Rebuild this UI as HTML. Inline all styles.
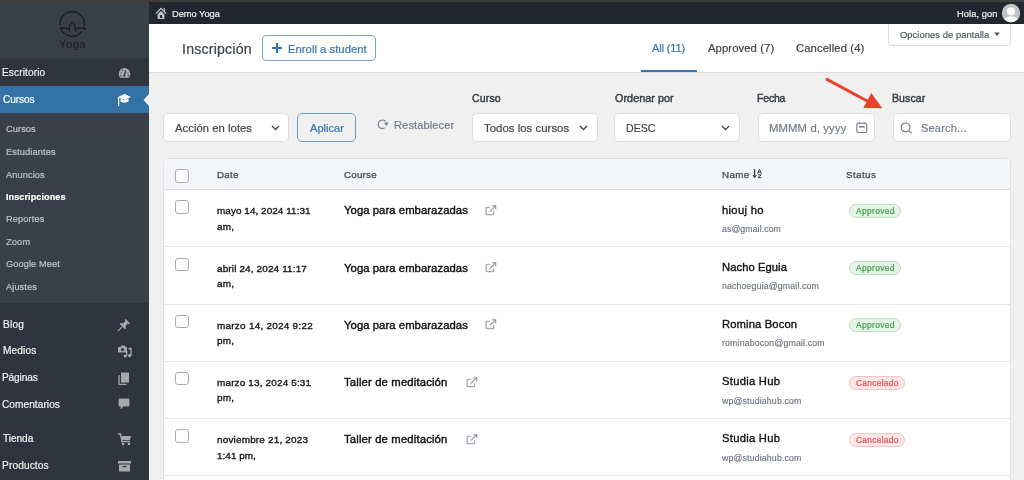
<!DOCTYPE html>
<html><head><meta charset="utf-8"><style>
html,body{margin:0;padding:0;width:1024px;height:480px;overflow:hidden;background:#f0f0f1;position:relative}
.r{position:absolute;display:block}
.t{position:absolute;white-space:nowrap;line-height:1;will-change:transform;font-family:"Liberation Sans",sans-serif}
</style></head><body>
<div class="r" style="left:0px;top:0px;width:1024px;height:2px;background:#3e3e3f"></div>
<div class="r" style="left:0px;top:2px;width:149px;height:56px;background:#3a404a"></div>
<div class="r" style="left:0px;top:58px;width:149px;height:422px;background:#2f343e"></div>
<div class="r" style="left:0px;top:86px;width:149px;height:27px;background:#3472a6"></div>
<div class="r" style="left:0px;top:113px;width:149px;height:190px;background:#3a404a"></div>
<svg class="r" style="left:0px;top:0px" width="149" height="58" viewBox="0 0 149 58">
<g fill="none" stroke="#1e1c1d" stroke-width="1.45" stroke-linecap="round" stroke-linejoin="round">
<path d="M59.92 24.71 A12.3 12.3 0 1 1 84.11 27.08"/>
<path d="M81.96 31.49 A12.3 12.3 0 0 1 60.60 28.09"/>
<path d="M69.5 31.4 C68.8 28 69.4 24.2 72.3 21.7 C75.2 24.2 75.8 28 75.1 31.4"/>
<path d="M60.4 28.2 C63 27.9 66 28.1 68.9 29.1 M75.6 29.1 C78.5 27.8 82 27.6 85.9 29.3"/>
</g></svg>
<div class="t" style="left:58.90px;top:39.00px;font-size:11.3px;color:#1e1c1d;font-weight:400;letter-spacing:0.425px;-webkit-text-stroke:0.1px #1e1c1d;">Yoga</div>
<div class="t" style="left:2.27px;top:68.00px;font-size:10.1px;color:#f0f0f1;font-weight:400;letter-spacing:0.127px;-webkit-text-stroke:0.2px #f0f0f1;">Escritorio</div>
<div class="t" style="left:2.59px;top:95.00px;font-size:10.1px;color:#ffffff;font-weight:400;letter-spacing:-0.077px;-webkit-text-stroke:0.2px #ffffff;">Cursos</div>
<div class="t" style="left:6.12px;top:125.00px;font-size:9.25px;color:#c3c4c7;font-weight:400;letter-spacing:0.078px;-webkit-text-stroke:0.2px #c3c4c7;">Cursos</div>
<div class="t" style="left:5.88px;top:148.00px;font-size:9.25px;color:#c3c4c7;font-weight:400;letter-spacing:0.12px;-webkit-text-stroke:0.2px #c3c4c7;">Estudiantes</div>
<div class="t" style="left:6.36px;top:171.00px;font-size:9.25px;color:#c3c4c7;font-weight:400;letter-spacing:0.082px;-webkit-text-stroke:0.2px #c3c4c7;">Anuncios</div>
<div class="t" style="left:6.07px;top:193.00px;font-size:9.1px;color:#ffffff;font-weight:700;letter-spacing:0.069px;-webkit-text-stroke:0.2px #ffffff;">Inscripciones</div>
<div class="t" style="left:5.88px;top:215.00px;font-size:9.25px;color:#c3c4c7;font-weight:400;letter-spacing:0.122px;-webkit-text-stroke:0.2px #c3c4c7;">Reportes</div>
<div class="t" style="left:6.34px;top:238.00px;font-size:9.25px;color:#c3c4c7;font-weight:400;letter-spacing:0.146px;-webkit-text-stroke:0.2px #c3c4c7;">Zoom</div>
<div class="t" style="left:6.12px;top:260.00px;font-size:9.25px;color:#c3c4c7;font-weight:400;letter-spacing:0.088px;-webkit-text-stroke:0.2px #c3c4c7;">Google Meet</div>
<div class="t" style="left:6.36px;top:283.00px;font-size:9.25px;color:#c3c4c7;font-weight:400;letter-spacing:0.077px;-webkit-text-stroke:0.2px #c3c4c7;">Ajustes</div>
<div class="t" style="left:2.60px;top:320.00px;font-size:10.1px;color:#f0f0f1;font-weight:400;letter-spacing:0.225px;-webkit-text-stroke:0.2px #f0f0f1;">Blog</div>
<div class="t" style="left:2.60px;top:346.00px;font-size:10.1px;color:#f0f0f1;font-weight:400;letter-spacing:0.147px;-webkit-text-stroke:0.2px #f0f0f1;">Medios</div>
<div class="t" style="left:2.45px;top:373.00px;font-size:10.1px;color:#f0f0f1;font-weight:400;letter-spacing:-0.129px;-webkit-text-stroke:0.2px #f0f0f1;">Páginas</div>
<div class="t" style="left:2.48px;top:400.00px;font-size:10.1px;color:#f0f0f1;font-weight:400;letter-spacing:0.065px;-webkit-text-stroke:0.2px #f0f0f1;">Comentarios</div>
<div class="t" style="left:2.67px;top:434.00px;font-size:10.1px;color:#f0f0f1;font-weight:400;letter-spacing:-0.036px;-webkit-text-stroke:0.2px #f0f0f1;">Tienda</div>
<div class="t" style="left:2.45px;top:461.00px;font-size:10.1px;color:#f0f0f1;font-weight:400;letter-spacing:0.148px;-webkit-text-stroke:0.2px #f0f0f1;">Productos</div>
<svg class="r" style="left:143px;top:94px" width="6" height="12"><path d="M6 0 L0.5 6 L6 12Z" fill="#f0f0f1"/></svg>
<svg class="r" style="left:118px;top:67px" width="13" height="12" viewBox="0 0 13 12">
<path d="M6.5 1 A5.8 5.8 0 0 0 0.7 6.8 C0.7 8.3 1.2 9.6 2.1 10.7 L10.9 10.7 C11.8 9.6 12.3 8.3 12.3 6.8 A5.8 5.8 0 0 0 6.5 1Z" fill="#a7aaad"/>
<path d="M7.6 3.5 L6.4 8.2" stroke="#2f343e" stroke-width="1.2"/><circle cx="6.3" cy="8.6" r="1.1" fill="#2f343e"/>
<circle cx="3" cy="6" r=".6" fill="#2f343e"/><circle cx="10" cy="6" r=".6" fill="#2f343e"/><circle cx="4.3" cy="3.4" r=".6" fill="#2f343e"/><circle cx="2.6" cy="8.7" r=".6" fill="#2f343e"/><circle cx="10.4" cy="8.7" r=".6" fill="#2f343e"/>
</svg>
<svg class="r" style="left:117px;top:93px" width="15" height="14" viewBox="0 0 15 14">
<path d="M7.5 1 L14 4 L7.5 7 L1 4Z" fill="#fff"/>
<path d="M3.5 5.5 L3.5 8.5 C5 9.8 10 9.8 11.5 8.5 L11.5 5.5 L7.5 7.5Z" fill="#fff"/>
<rect x="1" y="4" width="1.2" height="9" fill="#fff"/>
</svg>
<svg class="r" style="left:117px;top:318px" width="14" height="14" viewBox="0 0 14 14">
<path d="M8.5 0.8 L13.2 5.5 L12 6.2 L10.8 5.6 L8.6 8 L9 10.5 L8 11.3 L2.7 6 L3.5 5 L6 5.4 L8.4 3.2 L7.8 2 Z" fill="#a7aaad"/>
<path d="M5.2 8.8 L0.8 13.2" stroke="#a7aaad" stroke-width="1.2"/>
</svg>
<svg class="r" style="left:118px;top:345px" width="14" height="13" viewBox="0 0 14 13">
<path d="M0 2 L2.5 2 L3.5 0.5 L6.5 0.5 L7.5 2 L9 2 L9 7.5 L0 7.5Z" fill="#a7aaad"/><circle cx="4.5" cy="4.6" r="1.6" fill="#2f343e"/>
<path d="M10.5 4 L13 3.3 L13 10.5" stroke="#a7aaad" stroke-width="1.3" fill="none"/><circle cx="11.6" cy="10.6" r="1.6" fill="#a7aaad"/><circle cx="7.2" cy="11" r="1.6" fill="#a7aaad"/><path d="M8.8 11 L8.8 6" stroke="#a7aaad" stroke-width="1.2"/>
</svg>
<svg class="r" style="left:118px;top:372px" width="12" height="13" viewBox="0 0 12 13">
<rect x="3" y="0.5" width="8" height="10" fill="#a7aaad"/><path d="M1 3 L1 12.5 L8.5 12.5" stroke="#a7aaad" stroke-width="1.3" fill="none"/>
</svg>
<svg class="r" style="left:118px;top:398px" width="12" height="12" viewBox="0 0 12 12">
<path d="M1 1 L11 1 L11 8 L5 8 L3 11 L3 8 L1 8Z" fill="#a7aaad" stroke="#a7aaad" stroke-width="0.8" stroke-linejoin="round"/>
</svg>
<svg class="r" style="left:118px;top:433px" width="14" height="13" viewBox="0 0 14 13">
<path d="M0 1 L2.5 1 L4 8.5 L12 8.5" stroke="#a7aaad" stroke-width="1.3" fill="none"/><path d="M3 3 L13 3 L12 7 L3.8 7Z" fill="#a7aaad"/>
<circle cx="5" cy="11" r="1.3" fill="#a7aaad"/><circle cx="11" cy="11" r="1.3" fill="#a7aaad"/>
</svg>
<svg class="r" style="left:118px;top:461px" width="13" height="11" viewBox="0 0 13 11">
<rect x="0" y="0" width="13" height="2.5" fill="#a7aaad"/><rect x="1" y="3.5" width="11" height="7" fill="#a7aaad"/><rect x="4.5" y="5" width="4" height="1.2" fill="#2f343e"/>
</svg>
<div class="r" style="left:149px;top:2px;width:875px;height:22px;background:#23272f"></div>
<svg class="r" style="left:155px;top:7px" width="12" height="13" viewBox="0 0 12 13">
<path d="M0.9 6.6 L6 1.4 L11.1 6.6" stroke="#c3c4c7" stroke-width="1.3" fill="none"/>
<rect x="8.6" y="1.2" width="1.3" height="3.4" fill="#c3c4c7"/>
<path d="M2.6 7.3 L6 3.9 L9.4 7.3 L9.4 12 L2.6 12Z" fill="#c3c4c7"/>
<rect x="4.9" y="8.1" width="2.3" height="2.9" fill="#23272f"/>
</svg>
<div class="t" style="left:172.12px;top:10.00px;font-size:9.3px;color:#f0f0f1;font-weight:400;letter-spacing:-0.023px;-webkit-text-stroke:0.2px #f0f0f1;">Demo Yoga</div>
<div class="t" style="left:956.91px;top:10.00px;font-size:9.3px;color:#f0f0f1;font-weight:400;letter-spacing:0.069px;-webkit-text-stroke:0.2px #f0f0f1;">Hola, gon</div>
<svg class="r" style="left:1001px;top:3px" width="20" height="20" viewBox="0 0 20 20">
<defs><clipPath id="av"><circle cx="10" cy="10" r="9.2"/></clipPath></defs>
<circle cx="10" cy="10" r="9.2" fill="#c4c4c4"/>
<g clip-path="url(#av)" fill="#fff"><circle cx="10" cy="8.3" r="4.1"/><ellipse cx="10" cy="19.5" rx="8" ry="6.3"/></g>
</svg>
<div class="r" style="left:149px;top:24px;width:875px;height:48px;background:#fff"></div>
<div class="r" style="left:149px;top:72px;width:875px;height:1px;background:#dcdcde"></div>
<div class="r" style="left:149px;top:73px;width:875px;height:407px;background:#f0f0f1"></div>
<div class="t" style="left:181.95px;top:42.00px;font-size:14.2px;color:#3c434a;font-weight:400;letter-spacing:0.186px;-webkit-text-stroke:0.2px #3c434a;">Inscripción</div>
<div class="r" style="left:262px;top:35px;width:114px;height:26px;border:1px solid #7aa3cf;border-radius:4px;box-sizing:border-box;background:#fff"></div>
<div class="r" style="left:272px;top:47.2px;width:10.3px;height:2px;background:#3674b1"></div>
<div class="r" style="left:276.1px;top:43.1px;width:2px;height:10.2px;background:#3674b1"></div>
<div class="t" style="left:288.04px;top:44.00px;font-size:11.3px;color:#3674b1;font-weight:400;letter-spacing:0.013px;-webkit-text-stroke:0.2px #3674b1;">Enroll a student</div>
<div class="t" style="left:652.32px;top:43.00px;font-size:11.0px;color:#3674b1;font-weight:400;letter-spacing:-0.135px;-webkit-text-stroke:0.2px #3674b1;">All (11)</div>
<div class="t" style="left:707.99px;top:43.00px;font-size:11.3px;color:#3c434a;font-weight:400;letter-spacing:0.077px;-webkit-text-stroke:0.2px #3c434a;">Approved (7)</div>
<div class="t" style="left:796.18px;top:43.00px;font-size:11.3px;color:#3c434a;font-weight:400;letter-spacing:0.09px;-webkit-text-stroke:0.2px #3c434a;">Cancelled (4)</div>
<div class="r" style="left:641px;top:70px;width:56px;height:2px;background:#3674b1"></div>
<div class="r" style="left:888px;top:24px;width:123px;height:21.5px;border:1px solid #dcdcde;border-top:none;border-radius:0 0 4px 4px;box-sizing:border-box;background:#fff"></div>
<div class="t" style="left:899.85px;top:30.00px;font-size:9.4px;color:#50575e;font-weight:400;letter-spacing:0.058px;-webkit-text-stroke:0.2px #50575e;">Opciones de pantalla</div>
<svg class="r" style="left:994px;top:32px" width="6" height="5"><path d="M0.3 0.5 L5.7 0.5 L3 4.3Z" fill="#50575e"/></svg>
<div class="r" style="left:163px;top:113px;width:126px;height:29px;background:#fff;border:1px solid #dcdde1;border-radius:5px;box-sizing:border-box"></div>
<div class="t" style="left:175.32px;top:123.00px;font-size:11.3px;color:#3c434a;font-weight:400;letter-spacing:0.028px;-webkit-text-stroke:0.2px #3c434a;">Acción en lotes</div>
<svg class="r" style="left:270.5px;top:124.8px" width="9" height="6"><path d="M1 1 L4.5 4.5 L8 1" stroke="#3c434a" stroke-width="1.3" fill="none"/></svg>
<div class="r" style="left:297px;top:113px;width:59px;height:29px;border:1px solid #6f9bcb;border-radius:5px;box-sizing:border-box"></div>
<div class="t" style="left:309.64px;top:123.00px;font-size:11.1px;color:#3674b1;font-weight:400;letter-spacing:0.013px;-webkit-text-stroke:0.2px #3674b1;">Aplicar</div>
<svg class="r" style="left:376px;top:118px" width="14" height="13" viewBox="0 0 14 13">
<path d="M8.73 9.81 A4.2 4.2 0 1 1 9.6 3.6" stroke="#737a8b" stroke-width="1.2" fill="none"/><path d="M8.0 4.9 L12.5 4.3 L10.7 8.1Z" fill="#737a8b"/>
</svg>
<div class="t" style="left:394.14px;top:120.00px;font-size:11.1px;color:#737a8b;font-weight:400;letter-spacing:0.1px;-webkit-text-stroke:0.2px #737a8b;">Restablecer</div>
<div class="t" style="left:472.10px;top:93.00px;font-size:10.5px;color:#3b4047;font-weight:400;letter-spacing:0.172px;-webkit-text-stroke:0.45px #3b4047;">Curso</div>
<div class="r" style="left:472px;top:113px;width:126px;height:29px;background:#fff;border:1px solid #dcdde1;border-radius:5px;box-sizing:border-box"></div>
<div class="t" style="left:484.10px;top:123.00px;font-size:11.3px;color:#3c434a;font-weight:400;letter-spacing:0.065px;-webkit-text-stroke:0.2px #3c434a;">Todos los cursos</div>
<svg class="r" style="left:579.2px;top:124.8px" width="9" height="6"><path d="M1 1 L4.5 4.5 L8 1" stroke="#3c434a" stroke-width="1.3" fill="none"/></svg>
<div class="t" style="left:614.54px;top:93.00px;font-size:10.8px;color:#3b4047;font-weight:400;letter-spacing:0.044px;-webkit-text-stroke:0.45px #3b4047;">Ordenar por</div>
<div class="r" style="left:614px;top:113px;width:126px;height:29px;background:#fff;border:1px solid #dcdde1;border-radius:5px;box-sizing:border-box"></div>
<div class="t" style="left:625.79px;top:123.00px;font-size:10.6px;color:#3c434a;font-weight:400;letter-spacing:0.009px;-webkit-text-stroke:0.2px #3c434a;">DESC</div>
<svg class="r" style="left:721.3px;top:124.8px" width="9" height="6"><path d="M1 1 L4.5 4.5 L8 1" stroke="#3c434a" stroke-width="1.3" fill="none"/></svg>
<div class="t" style="left:756.93px;top:93.00px;font-size:10.5px;color:#3b4047;font-weight:400;letter-spacing:-0.184px;-webkit-text-stroke:0.45px #3b4047;">Fecha</div>
<div class="r" style="left:758px;top:113px;width:117px;height:29px;background:#fff;border:1px solid #dcdde1;border-radius:5px;box-sizing:border-box"></div>
<div class="t" style="left:769.02px;top:123.00px;font-size:11.3px;color:#737a8b;font-weight:400;letter-spacing:0.124px;-webkit-text-stroke:0.2px #737a8b;">MMMM d, yyyy</div>
<svg class="r" style="left:856px;top:122px" width="12" height="12" viewBox="0 0 12 12">
<rect x="0.8" y="1.3" width="10" height="9.2" rx="1.6" stroke="#737a8b" stroke-width="1.1" fill="none"/>
<path d="M3.4 0.2 L3.4 2.2 M8.2 0.2 L8.2 2.2" stroke="#737a8b" stroke-width="1.1"/><path d="M3 4.8 L8.6 4.8" stroke="#737a8b" stroke-width="1.5"/>
</svg>
<div class="t" style="left:892.27px;top:93.00px;font-size:10.5px;color:#3b4047;font-weight:400;letter-spacing:0.114px;-webkit-text-stroke:0.45px #3b4047;">Buscar</div>
<div class="r" style="left:893px;top:113px;width:118px;height:29px;background:#fff;border:1px solid #dcdde1;border-radius:5px;box-sizing:border-box"></div>
<svg class="r" style="left:900px;top:121.5px" width="13" height="12" viewBox="0 0 13 12">
<circle cx="5.6" cy="5.4" r="4.4" stroke="#737a8b" stroke-width="1.2" fill="none"/><path d="M8.8 8.6 L11.6 11.3" stroke="#737a8b" stroke-width="1.2"/>
</svg>
<div class="t" style="left:921.38px;top:123.00px;font-size:11.1px;color:#737a8b;font-weight:400;letter-spacing:0.147px;-webkit-text-stroke:0.2px #737a8b;">Search...</div>
<svg class="r" style="left:820px;top:72px" width="70" height="42" viewBox="0 0 70 42">
<path d="M7 7.4 L49 30" stroke="#e8432a" stroke-width="2.9" stroke-linecap="round"/>
<path d="M51.3 21 L62.4 36.3 L43.3 36Z" fill="#e8432a"/>
</svg>
<div class="r" style="left:163.3px;top:158.3px;width:847.7px;height:331.7px;background:#fff;border:1px solid #dfe1e5;border-radius:5px;box-sizing:border-box"></div>
<div class="r" style="left:164.3px;top:159.3px;width:845.7px;height:30px;background:#f4f5f8;border-radius:4px 4px 0 0"></div>
<div class="r" style="left:164.3px;top:189px;width:845.7px;height:1px;background:#dadce1"></div>
<div class="r" style="left:175.3px;top:169.3px;width:13.5px;height:13.5px;border:1px solid #a9abb0;border-radius:3px;box-sizing:border-box;background:#fff"></div>
<div class="t" style="left:216.83px;top:170.00px;font-size:9.8px;color:#41464d;font-weight:400;letter-spacing:0.224px;-webkit-text-stroke:0.25px #41464d;">Date</div>
<div class="t" style="left:344.12px;top:170.00px;font-size:9.8px;color:#41464d;font-weight:400;letter-spacing:0.215px;-webkit-text-stroke:0.25px #41464d;">Course</div>
<div class="t" style="left:721.68px;top:170.00px;font-size:9.8px;color:#41464d;font-weight:400;letter-spacing:0.357px;-webkit-text-stroke:0.25px #41464d;">Name</div>
<svg class="r" style="left:751px;top:168px" width="12" height="12" viewBox="0 0 12 12">
<path d="M3.6 1.3 L3.6 8.6" stroke="#3b4047" stroke-width="1.35"/><path d="M1.3 7.3 L5.9 7.3 L3.6 10.2Z" fill="#3b4047"/>
<path d="M6.6 5.5 L8.5 1.3 L10.4 5.5 M7.3 4.1 L9.7 4.1" stroke="#3b4047" stroke-width="1.0" fill="none"/>
<path d="M6.9 6.8 L10.2 6.8 L6.9 9.7 L10.3 9.7" stroke="#3b4047" stroke-width="1.0" fill="none"/>
</svg>
<div class="t" style="left:846.34px;top:170.00px;font-size:9.8px;color:#41464d;font-weight:400;letter-spacing:0.407px;-webkit-text-stroke:0.25px #41464d;">Status</div>
<div class="r" style="left:175.3px;top:200.3px;width:13.5px;height:13.5px;border:1px solid #a9abb0;border-radius:3px;box-sizing:border-box;background:#fff"></div>
<div class="t" style="left:216.62px;top:206.00px;font-size:9.95px;color:#141619;font-weight:400;letter-spacing:0.052px;-webkit-text-stroke:0.35px #141619;">mayo 14, 2024 11:31</div>
<div class="t" style="left:217.00px;top:222.00px;font-size:9.95px;color:#141619;font-weight:400;letter-spacing:0.2px;-webkit-text-stroke:0.35px #141619;">am,</div>
<div class="t" style="left:344.38px;top:205.00px;font-size:11.3px;color:#0f1113;font-weight:400;letter-spacing:0.056px;-webkit-text-stroke:0.4px #0f1113;">Yoga para embarazadas</div>
<svg class="r" style="left:485.2px;top:204.9px" width="12" height="11" viewBox="0 0 12 11">
<path d="M4.9 2.3 L2.3 2.3 Q1.1 2.3 1.1 3.5 L1.1 8.5 Q1.1 9.7 2.3 9.7 L7.5 9.7 Q8.7 9.7 8.7 8.5 L8.7 6.3" stroke="#8d93a1" stroke-width="1.1" fill="none"/>
<path d="M7.2 0.7 L10.7 0.7 L10.7 4.2 M10.7 0.7 L4.7 6.7" stroke="#8d93a1" stroke-width="1.1" fill="none"/>
</svg>
<div class="t" style="left:721.79px;top:205.00px;font-size:11.2px;color:#0f1113;font-weight:400;letter-spacing:0.322px;-webkit-text-stroke:0.35px #0f1113;">hiouj ho</div>
<div class="t" style="left:722.06px;top:225.00px;font-size:8.75px;color:#6b7185;font-weight:400;letter-spacing:0.079px;-webkit-text-stroke:0.15px #6b7185;">as@gmail.com</div>
<div class="r" style="left:849px;top:203.9px;width:52px;height:14px;background:#e5f4e6;border:1px solid #b9e1bc;border-radius:8px;box-sizing:border-box"></div>
<div class="t" style="left:855.92px;top:207.00px;font-size:8.4px;color:#419d4b;font-weight:400;letter-spacing:0.362px;-webkit-text-stroke:0.22px #419d4b;">Approved</div>
<div class="r" style="left:164.3px;top:246px;width:845.7px;height:1px;background:#e7e8ec"></div>
<div class="r" style="left:175.3px;top:257.5px;width:13.5px;height:13.5px;border:1px solid #a9abb0;border-radius:3px;box-sizing:border-box;background:#fff"></div>
<div class="t" style="left:216.64px;top:264.00px;font-size:9.95px;color:#141619;font-weight:400;letter-spacing:0.143px;-webkit-text-stroke:0.35px #141619;">abril 24, 2024 11:17</div>
<div class="t" style="left:217.00px;top:279.00px;font-size:9.95px;color:#141619;font-weight:400;letter-spacing:0.2px;-webkit-text-stroke:0.35px #141619;">am,</div>
<div class="t" style="left:344.38px;top:263.00px;font-size:11.3px;color:#0f1113;font-weight:400;letter-spacing:0.056px;-webkit-text-stroke:0.4px #0f1113;">Yoga para embarazadas</div>
<svg class="r" style="left:485.2px;top:262.1px" width="12" height="11" viewBox="0 0 12 11">
<path d="M4.9 2.3 L2.3 2.3 Q1.1 2.3 1.1 3.5 L1.1 8.5 Q1.1 9.7 2.3 9.7 L7.5 9.7 Q8.7 9.7 8.7 8.5 L8.7 6.3" stroke="#8d93a1" stroke-width="1.1" fill="none"/>
<path d="M7.2 0.7 L10.7 0.7 L10.7 4.2 M10.7 0.7 L4.7 6.7" stroke="#8d93a1" stroke-width="1.1" fill="none"/>
</svg>
<div class="t" style="left:721.60px;top:262.00px;font-size:11.2px;color:#0f1113;font-weight:400;letter-spacing:0.08px;-webkit-text-stroke:0.35px #0f1113;">Nacho Eguia</div>
<div class="t" style="left:721.79px;top:282.00px;font-size:8.75px;color:#6b7185;font-weight:400;letter-spacing:0.152px;-webkit-text-stroke:0.15px #6b7185;">nachoeguia@gmail.com</div>
<div class="r" style="left:849px;top:261.1px;width:52px;height:14px;background:#e5f4e6;border:1px solid #b9e1bc;border-radius:8px;box-sizing:border-box"></div>
<div class="t" style="left:855.92px;top:264.00px;font-size:8.4px;color:#419d4b;font-weight:400;letter-spacing:0.362px;-webkit-text-stroke:0.22px #419d4b;">Approved</div>
<div class="r" style="left:164.3px;top:304px;width:845.7px;height:1px;background:#e7e8ec"></div>
<div class="r" style="left:175.3px;top:314.70000000000005px;width:13.5px;height:13.5px;border:1px solid #a9abb0;border-radius:3px;box-sizing:border-box;background:#fff"></div>
<div class="t" style="left:216.62px;top:321.00px;font-size:9.95px;color:#141619;font-weight:400;letter-spacing:0.252px;-webkit-text-stroke:0.35px #141619;">marzo 14, 2024 9:22</div>
<div class="t" style="left:217.00px;top:336.00px;font-size:9.95px;color:#141619;font-weight:400;letter-spacing:0.2px;-webkit-text-stroke:0.35px #141619;">pm,</div>
<div class="t" style="left:344.38px;top:320.00px;font-size:11.3px;color:#0f1113;font-weight:400;letter-spacing:0.056px;-webkit-text-stroke:0.4px #0f1113;">Yoga para embarazadas</div>
<svg class="r" style="left:485.2px;top:319.30000000000007px" width="12" height="11" viewBox="0 0 12 11">
<path d="M4.9 2.3 L2.3 2.3 Q1.1 2.3 1.1 3.5 L1.1 8.5 Q1.1 9.7 2.3 9.7 L7.5 9.7 Q8.7 9.7 8.7 8.5 L8.7 6.3" stroke="#8d93a1" stroke-width="1.1" fill="none"/>
<path d="M7.2 0.7 L10.7 0.7 L10.7 4.2 M10.7 0.7 L4.7 6.7" stroke="#8d93a1" stroke-width="1.1" fill="none"/>
</svg>
<div class="t" style="left:721.83px;top:319.00px;font-size:11.2px;color:#0f1113;font-weight:400;letter-spacing:0.154px;-webkit-text-stroke:0.35px #0f1113;">Romina Bocon</div>
<div class="t" style="left:721.80px;top:339.00px;font-size:8.75px;color:#6b7185;font-weight:400;letter-spacing:0.163px;-webkit-text-stroke:0.15px #6b7185;">rominabocon@gmail.com</div>
<div class="r" style="left:849px;top:318.30000000000007px;width:52px;height:14px;background:#e5f4e6;border:1px solid #b9e1bc;border-radius:8px;box-sizing:border-box"></div>
<div class="t" style="left:855.92px;top:321.00px;font-size:8.4px;color:#419d4b;font-weight:400;letter-spacing:0.362px;-webkit-text-stroke:0.22px #419d4b;">Approved</div>
<div class="r" style="left:164.3px;top:361px;width:845.7px;height:1px;background:#e7e8ec"></div>
<div class="r" style="left:175.3px;top:371.90000000000003px;width:13.5px;height:13.5px;border:1px solid #a9abb0;border-radius:3px;box-sizing:border-box;background:#fff"></div>
<div class="t" style="left:216.62px;top:378.00px;font-size:9.95px;color:#141619;font-weight:400;letter-spacing:0.163px;-webkit-text-stroke:0.35px #141619;">marzo 13, 2024 5:31</div>
<div class="t" style="left:217.00px;top:393.00px;font-size:9.95px;color:#141619;font-weight:400;letter-spacing:0.2px;-webkit-text-stroke:0.35px #141619;">pm,</div>
<div class="t" style="left:344.30px;top:377.00px;font-size:11.3px;color:#0f1113;font-weight:400;letter-spacing:0.149px;-webkit-text-stroke:0.4px #0f1113;">Taller de meditación</div>
<svg class="r" style="left:465.5px;top:376.50000000000006px" width="12" height="11" viewBox="0 0 12 11">
<path d="M4.9 2.3 L2.3 2.3 Q1.1 2.3 1.1 3.5 L1.1 8.5 Q1.1 9.7 2.3 9.7 L7.5 9.7 Q8.7 9.7 8.7 8.5 L8.7 6.3" stroke="#8d93a1" stroke-width="1.1" fill="none"/>
<path d="M7.2 0.7 L10.7 0.7 L10.7 4.2 M10.7 0.7 L4.7 6.7" stroke="#8d93a1" stroke-width="1.1" fill="none"/>
</svg>
<div class="t" style="left:721.82px;top:376.00px;font-size:11.2px;color:#0f1113;font-weight:400;letter-spacing:0.279px;-webkit-text-stroke:0.35px #0f1113;">Studia Hub</div>
<div class="t" style="left:722.29px;top:397.00px;font-size:8.75px;color:#6b7185;font-weight:400;letter-spacing:0.158px;-webkit-text-stroke:0.15px #6b7185;">wp@studiahub.com</div>
<div class="r" style="left:849px;top:375.50000000000006px;width:56px;height:14.4px;background:#fde6e6;border:1px solid #f4c4c4;border-radius:8px;box-sizing:border-box"></div>
<div class="t" style="left:855.87px;top:379.00px;font-size:8.4px;color:#e25353;font-weight:400;letter-spacing:0.287px;-webkit-text-stroke:0.22px #e25353;">Cancelado</div>
<div class="r" style="left:164.3px;top:418px;width:845.7px;height:1px;background:#e7e8ec"></div>
<div class="r" style="left:164.3px;top:475px;width:845.7px;height:1px;background:#e7e8ec"></div>
<div class="r" style="left:175.3px;top:429.1px;width:13.5px;height:13.5px;border:1px solid #a9abb0;border-radius:3px;box-sizing:border-box;background:#fff"></div>
<div class="t" style="left:216.62px;top:435.00px;font-size:9.95px;color:#141619;font-weight:400;letter-spacing:0.187px;-webkit-text-stroke:0.35px #141619;">noviembre 21, 2023</div>
<div class="t" style="left:217.00px;top:451.00px;font-size:9.95px;color:#141619;font-weight:400;letter-spacing:0.028px;-webkit-text-stroke:0.35px #141619;">1:41 pm,</div>
<div class="t" style="left:344.30px;top:434.00px;font-size:11.3px;color:#0f1113;font-weight:400;letter-spacing:0.149px;-webkit-text-stroke:0.4px #0f1113;">Taller de meditación</div>
<svg class="r" style="left:465.5px;top:433.70000000000005px" width="12" height="11" viewBox="0 0 12 11">
<path d="M4.9 2.3 L2.3 2.3 Q1.1 2.3 1.1 3.5 L1.1 8.5 Q1.1 9.7 2.3 9.7 L7.5 9.7 Q8.7 9.7 8.7 8.5 L8.7 6.3" stroke="#8d93a1" stroke-width="1.1" fill="none"/>
<path d="M7.2 0.7 L10.7 0.7 L10.7 4.2 M10.7 0.7 L4.7 6.7" stroke="#8d93a1" stroke-width="1.1" fill="none"/>
</svg>
<div class="t" style="left:721.82px;top:433.00px;font-size:11.2px;color:#0f1113;font-weight:400;letter-spacing:0.279px;-webkit-text-stroke:0.35px #0f1113;">Studia Hub</div>
<div class="t" style="left:722.29px;top:454.00px;font-size:8.75px;color:#6b7185;font-weight:400;letter-spacing:0.158px;-webkit-text-stroke:0.15px #6b7185;">wp@studiahub.com</div>
<div class="r" style="left:849px;top:432.70000000000005px;width:56px;height:14.4px;background:#fde6e6;border:1px solid #f4c4c4;border-radius:8px;box-sizing:border-box"></div>
<div class="t" style="left:855.87px;top:436.00px;font-size:8.4px;color:#e25353;font-weight:400;letter-spacing:0.287px;-webkit-text-stroke:0.22px #e25353;">Cancelado</div>
</body></html>
